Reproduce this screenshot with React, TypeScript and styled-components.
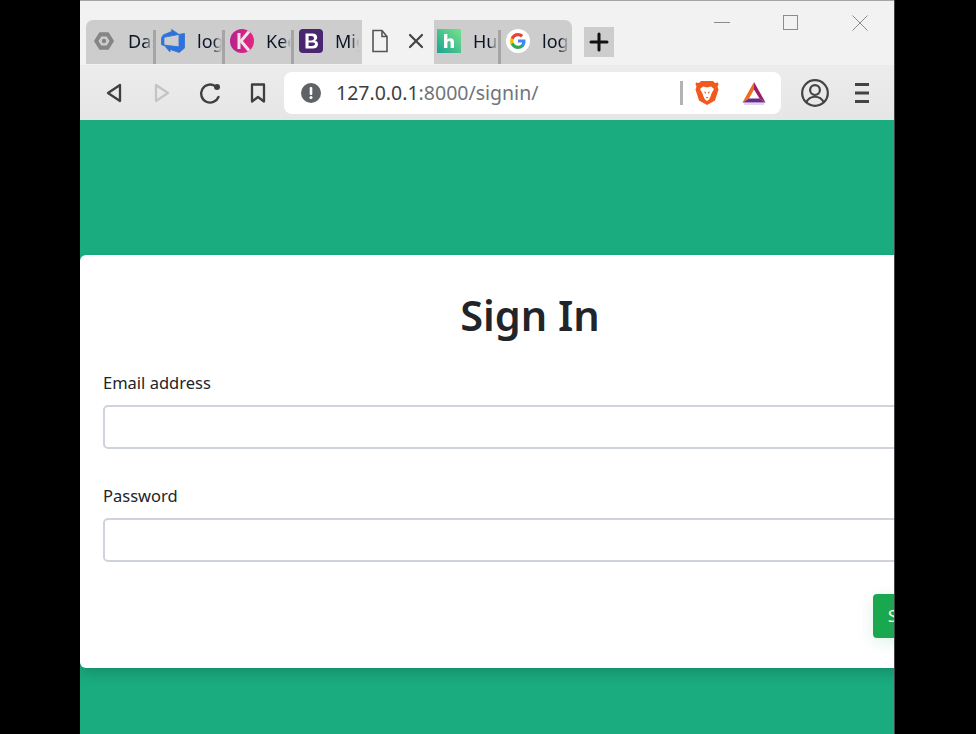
import styled, { createGlobalStyle } from "styled-components";
import { ReactNode } from "react";

const GlobalStyle = createGlobalStyle`
  html, body {
    margin: 0;
    height: 100%;
    background: #000;
    overflow: hidden;
  }
  * {
    box-sizing: border-box;
  }
`;

const Page = styled.div`
  width: 976px;
  height: 734px;
  padding-left: 80px;
  background: #000;
  font-family: "Noto Sans", "Open Sans", sans-serif;
`;

const BrowserWindow = styled.div`
  width: 815px;
  height: 734px;
  display: flex;
  flex-direction: column;
  overflow: hidden;
  border-right: 1px solid #444;
`;

const TitleBar = styled.div`
  height: 65px;
  flex: none;
  display: flex;
  align-items: flex-start;
  padding: 19px 0 0 6px;
  background: #f2f2f2;
  border-top: 1px solid #a6a6a6;
`;

const Tab = styled.div<{ $w: number; $pad?: number; $sep?: boolean; $last?: boolean }>`
  position: relative;
  width: ${(p) => p.$w}px;
  height: 44px;
  flex: none;
  display: flex;
  align-items: center;
  gap: 12px;
  padding: 0 3px 2px ${(p) => p.$pad ?? 5}px;
  background: #cdcdcd;
  border-radius: ${(p) => (p.$last ? "0 7px 0 0" : "0")};
  overflow: hidden;

  &:first-child {
    border-radius: 7px 0 0 0;
  }

  ${(p) =>
    p.$sep &&
    `&::after {
      content: "";
      position: absolute;
      right: 0;
      top: 10px;
      bottom: 0;
      width: 3px;
      background: #a5a5a5;
    }`}
`;

const ActiveTab = styled.div`
  width: 72px;
  height: 46px;
  margin-top: -1px;
  flex: none;
  display: flex;
  align-items: center;
  justify-content: space-between;
  padding: 0 6px 2px;
  background: #f2f2f2;
  border-radius: 7px 7px 0 0;
`;

const TabIcon = styled.span`
  width: 24px;
  height: 24px;
  flex: none;
  display: flex;
  align-items: center;
  justify-content: center;
`;

const TabLabel = styled.span`
  font-size: 18px;
  line-height: 24px;
  color: #0c1528;
  white-space: nowrap;
  overflow: hidden;
  flex: 1;
  -webkit-mask-image: linear-gradient(to right, #000 65%, transparent 100%);
  mask-image: linear-gradient(to right, #000 65%, transparent 100%);
`;

const NewTab = styled.div`
  width: 30px;
  height: 30px;
  margin: 7px 0 0 12px;
  flex: none;
  display: flex;
  align-items: center;
  justify-content: center;
  background: #cdcdcd;
`;

const WindowControls = styled.div`
  margin-left: auto;
  margin-top: -5px;
  width: 180px;
  padding-right: 26px;
  flex: none;
  display: flex;
  justify-content: space-between;
  align-items: center;
`;

const Toolbar = styled.div`
  height: 55px;
  flex: none;
  display: flex;
  align-items: center;
  padding-left: 22px;
  background: linear-gradient(#ececec, #e6e6e6);
`;

const ToolButton = styled.span<{ $gap: number }>`
  width: 24px;
  height: 24px;
  margin-right: ${(p) => p.$gap}px;
  flex: none;
  display: flex;
  align-items: center;
  justify-content: center;
`;

const AddressBar = styled.div`
  width: 497px;
  height: 42px;
  margin: 0 20px 0 14px;
  flex: none;
  display: flex;
  align-items: center;
  padding: 0 15px 0 17px;
  background: #fff;
  border-radius: 8px;
`;

const Url = styled.div`
  margin-left: 15px;
  flex: 1;
  font-size: 19.5px;
  color: #3c4043;
  white-space: nowrap;
`;

const UrlRest = styled.span`
  color: #70757a;
`;

const UrlDivider = styled.span`
  width: 3px;
  height: 24px;
  margin-right: 12px;
  background: #b3b3b3;
`;

const ExtensionSlot = styled.span`
  display: flex;
  margin-right: 23px;
`;

const ProfileSlot = styled.span`
  display: flex;
  margin-right: 26px;
`;

const Green = styled.main`
  flex: 1;
  padding-top: 135px;
  background: #1aab7e;
`;

const Card = styled.section`
  width: 900px;
  height: 413px;
  padding: 31px 23px 0;
  background: #fff;
  border-radius: 6px;
  box-shadow: 0 6px 12px rgba(0, 0, 0, 0.15);
`;

const Title = styled.h1`
  margin: 0 0 27px;
  text-align: center;
  font-size: 41.5px;
  line-height: 58px;
  font-weight: 600;
  color: #212529;
`;

const Field = styled.div`
  & + & {
    margin-top: 35px;
  }
`;

const Label = styled.label`
  display: block;
  margin-bottom: 10px;
  font-size: 16.5px;
  line-height: 24px;
  color: #212529;
`;

const Input = styled.input`
  display: block;
  width: 100%;
  height: 44px;
  padding: 0 12px;
  background: #fff;
  border: 2px solid #ced4da;
  border-radius: 5px;
  outline: none;
`;

const Actions = styled.div`
  display: flex;
  justify-content: flex-end;
  margin-top: 32px;
`;

const SubmitButton = styled.button`
  width: 84px;
  height: 44px;
  border: none;
  border-radius: 4px;
  background: #1aa84f;
  color: #fff;
  font-family: inherit;
  font-size: 16px;
  text-align: left;
  padding-left: 15px;
  box-shadow: 0 4px 16px rgba(27, 171, 126, 0.15);
`;

const Stroke = ({ children, size = 24, color = "#3f3f3f", width = 2 }: { children: ReactNode; size?: number; color?: string; width?: number }) => (
  <svg width={size} height={size} viewBox="0 0 24 24" fill="none" stroke={color} strokeWidth={width} strokeLinecap="round" strokeLinejoin="round">
    {children}
  </svg>
);

const HexIcon = () => (
  <svg width="22" height="22" viewBox="0 0 24 24">
    <path d="M7 2.500h10l6 9.500-6 9.500H7L1 12z" fill="#858585" />
    <path d="M9 7h6l3 5-3 5H9l-3-5z" fill="#cdcdcd" />
    <circle cx="12" cy="12" r="2.500" fill="#858585" />
  </svg>
);

const AzureIcon = () => (
  <svg width="24" height="24" viewBox="0 0 24 24">
    <path
      fill="#2f72dc"
      stroke="#2f72dc"
      strokeWidth="0.8"
      d="M0.500 8.877L2.247 5.910l8.405-3.416V.5l7.370 4.915L2.966 8.338v8.225L0.500 15.707zm23-4.450v14.651l-5.253 4.400-9.303-3.057v2.556l-5.978-6.916 15.057 1.798V5.415z"
    />
  </svg>
);

const KeepIcon = () => (
  <svg width="24" height="24" viewBox="0 0 24 24">
    <defs>
      <linearGradient id="keep" x1="0" y1="0" x2="1" y2="0">
        <stop offset="0" stopColor="#b8218f" />
        <stop offset="1" stopColor="#e3267f" />
      </linearGradient>
    </defs>
    <circle cx="12" cy="12" r="12" fill="url(#keep)" />
    <rect x="7.500" y="4" width="3" height="16" fill="#efe3ea" />
    <path d="M19 2.500L11 12l8 9.500" fill="none" stroke="#efe3ea" strokeWidth="3" />
  </svg>
);

const BootstrapIcon = () => (
  <svg width="24" height="24" viewBox="0 0 24 24">
    <rect width="24" height="24" rx="4" fill="#4a2670" />
    <path
      fillRule="evenodd"
      fill="#fff"
      d="M6.500 4.500h7c3 0 4.700 1.500 4.700 3.900 0 1.600-1 2.800-2.300 3.200 1.900.3 3.100 1.700 3.100 3.600 0 2.700-2 4.300-5.200 4.300H6.500zM9.600 7v4.400h2.700c1.700 0 2.700-.8 2.700-2.200S14 7 12.400 7zm0 6.600v3.300H13c1.900 0 3-.6 3-1.800 0-1.200-1.100-1.500-3-1.500z"
    />
  </svg>
);

const FileIcon = () => (
  <svg width="24" height="24" viewBox="0 0 24 24" fill="none" stroke="#555" strokeWidth="1.600">
    <path d="M5 1.500h9l5 6v15H5zM14 1.500v6h5" />
  </svg>
);

const HuIcon = () => (
  <svg width="24" height="24" viewBox="0 0 24 24">
    <defs>
      <linearGradient id="hu" x1="0" y1="1" x2="1" y2="0">
        <stop offset="0" stopColor="#1aa58f" />
        <stop offset="1" stopColor="#78e28c" />
      </linearGradient>
    </defs>
    <rect width="24" height="24" fill="url(#hu)" />
    <path d="M7 5h3.400v5.600c.8-.9 1.800-1.300 3-1.300 2.400 0 3.600 1.500 3.600 4V19h-3.400v-5.200c0-1.100-.5-1.700-1.500-1.700-1 0-1.700.7-1.700 1.800V19H7z" fill="#fff" />
  </svg>
);

const GoogleIcon = () => (
  <svg width="24" height="24" viewBox="0 0 24 24">
    <circle cx="12" cy="12" r="12" fill="#fff" />
    <path d="M19.500 12.200c0-.6 0-1.100-.1-1.600H12v3h4.300c-.2 1-.8 1.800-1.600 2.400v2h2.600c1.400-1.400 2.200-3.400 2.200-5.800z" fill="#4285f4" />
    <path d="M12 20c2.100 0 3.900-.7 5.300-2l-2.600-2c-.7.500-1.600.8-2.700.8-2.100 0-3.800-1.400-4.500-3.300H4.800v2C6.100 18.200 8.900 20 12 20z" fill="#34a853" />
    <path d="M7.500 13.500c-.3-1-.3-2 0-3v-2H4.800c-.9 2.100-.9 4.900 0 7z" fill="#fbbc05" />
    <path d="M12 7.200c1.200 0 2.200.4 3 1.200l2.300-2.300C15.900 4.800 14.100 4 12 4 8.900 4 6.100 5.800 4.800 8.500l2.700 2c.7-1.900 2.400-3.300 4.500-3.300z" fill="#ea4335" />
  </svg>
);

const BraveIcon = () => (
  <svg width="24" height="26" viewBox="0 0 24 26">
    <path d="M6 1h12l2 2 3-.5.5 2-1 2 1 3-3.500 11L12 25l-8-4.500L.5 9.500l1-3-1-2 .5-2 3 .5z" fill="#f15a1d" />
    <path d="M8 6.500l4 1 4-1 3 2.500-2.500 4.500-1 3-1.500 3-2 1.500-2-1.500-1.500-3-1-3L5 9z" fill="#fff" />
    <path d="M9 11.500l2 .5-.5 2zM15 11.500l-2 .5.5 2zM10.500 17h3L12 18.500z" fill="#f15a1d" />
  </svg>
);

const BatIcon = () => (
  <svg width="24" height="24" viewBox="0 0 24 24">
    <path d="M12 1L.5 21.500 7 17.500l5-9z" fill="#f26b1d" />
    <path d="M12 1l11.500 20.500-6-4-5.500-9z" fill="#9e1f63" />
    <path d="M.5 21.500h23l-6-4H7z" fill="#662d91" />
    <path d="M2 23h20" stroke="#c9a6d4" strokeWidth="1" />
  </svg>
);

const BackIcon = () => (
  <svg width="16" height="20" viewBox="0 0 16 20" fill="none" stroke="#3f3f3f" strokeWidth="2.300" strokeLinejoin="round">
    <path d="M14 2v16L2 10z" />
  </svg>
);

const ForwardIcon = () => (
  <svg width="16" height="20" viewBox="0 0 16 20" fill="none" stroke="#c4c4c4" strokeWidth="2.300" strokeLinejoin="round">
    <path d="M2 2v16l12-8z" />
  </svg>
);

const ReloadIcon = () => (
  <svg width="24" height="24" viewBox="0 0 24 24" fill="none">
    <path d="M20.500 16A9 9 0 1 1 17 5" stroke="#3f3f3f" strokeWidth="2.400" strokeLinecap="round" />
    <circle cx="19" cy="6" r="3" fill="#3f3f3f" />
  </svg>
);

const BookmarkIcon = () => (
  <svg width="16" height="20" viewBox="0 0 16 20" fill="none" stroke="#3f3f3f" strokeWidth="2.300" strokeLinejoin="round">
    <path d="M2 1.500h12v17l-6-4.500-6 4.500z" />
  </svg>
);

const MenuIcon = () => (
  <svg width="14" height="20" viewBox="0 0 14 20" fill="#444">
    <rect width="14" height="3" />
    <rect y="8.500" width="14" height="3" />
    <rect y="17" width="14" height="3" />
  </svg>
);

const tabs = [
  { w: 70, pad: 6, label: "Dash", icon: <HexIcon />, sep: true },
  { w: 69, label: "login", icon: <AzureIcon />, sep: true },
  { w: 69, label: "Keep", icon: <KeepIcon />, sep: true },
  { w: 68, label: "Migrate", icon: <BootstrapIcon /> },
];

const App = () => (
  <Page>
    <GlobalStyle />
    <BrowserWindow>
      <TitleBar>
        {tabs.map((t) => (
          <Tab key={t.label} $w={t.w} $pad={t.pad} $sep={t.sep}>
            <TabIcon>{t.icon}</TabIcon>
            <TabLabel>{t.label}</TabLabel>
          </Tab>
        ))}
        <ActiveTab>
          <TabIcon>
            <FileIcon />
          </TabIcon>
          <Stroke size={24} width={2.2} color="#444">
            <path d="M6 6l12 12M18 6L6 18" />
          </Stroke>
        </ActiveTab>
        <Tab $w={67} $pad={3} $sep>
          <TabIcon>
            <HuIcon />
          </TabIcon>
          <TabLabel>Hu</TabLabel>
        </Tab>
        <Tab $w={71} $last>
          <TabIcon>
            <GoogleIcon />
          </TabIcon>
          <TabLabel>login</TabLabel>
        </Tab>
        <NewTab>
          <Stroke size={24} width={3} color="#111">
            <path d="M12 4v16M4 12h16" />
          </Stroke>
        </NewTab>
        <WindowControls>
          <svg width="16" height="16" viewBox="0 0 16 16" stroke="#8c8c8c" fill="none">
            <path d="M0 7.500h16" />
          </svg>
          <svg width="16" height="16" viewBox="0 0 16 16" stroke="#8c8c8c" fill="none">
            <rect x="0.500" y="0.500" width="14" height="14" />
          </svg>
          <svg width="16" height="16" viewBox="0 0 16 16" stroke="#8c8c8c" fill="none">
            <path d="M0.500 0.500l15 15M15.500 0.500l-15 15" />
          </svg>
        </WindowControls>
      </TitleBar>
      <Toolbar>
        <ToolButton $gap={24}>
          <BackIcon />
        </ToolButton>
        <ToolButton $gap={24}>
          <ForwardIcon />
        </ToolButton>
        <ToolButton $gap={24}>
          <ReloadIcon />
        </ToolButton>
        <ToolButton $gap={0}>
          <BookmarkIcon />
        </ToolButton>
        <AddressBar>
          <svg width="20" height="20" viewBox="0 0 20 20">
            <circle cx="10" cy="10" r="10" fill="#5f6368" />
            <rect x="8.700" y="4" width="2.600" height="8" rx="1" fill="#fff" />
            <circle cx="10" cy="14.600" r="1.500" fill="#fff" />
          </svg>
          <Url>
            127.0.0.1<UrlRest>:8000/signin/</UrlRest>
          </Url>
          <UrlDivider />
          <ExtensionSlot>
            <BraveIcon />
          </ExtensionSlot>
          <BatIcon />
        </AddressBar>
        <ProfileSlot>
          <Stroke size={28} width={1.9} color="#444">
            <circle cx="12" cy="12" r="11" />
            <circle cx="12" cy="9.500" r="4.200" />
            <path d="M4.500 20c1.500-3 4.500-4.800 7.500-4.800s6 1.800 7.500 4.800" />
          </Stroke>
        </ProfileSlot>
        <MenuIcon />
      </Toolbar>
      <Green>
        <Card>
          <Title>Sign In</Title>
          <Field>
            <Label>Email address</Label>
            <Input />
          </Field>
          <Field>
            <Label>Password</Label>
            <Input />
          </Field>
          <Actions>
            <SubmitButton>Sign In</SubmitButton>
          </Actions>
        </Card>
      </Green>
    </BrowserWindow>
  </Page>
);

export default App;
